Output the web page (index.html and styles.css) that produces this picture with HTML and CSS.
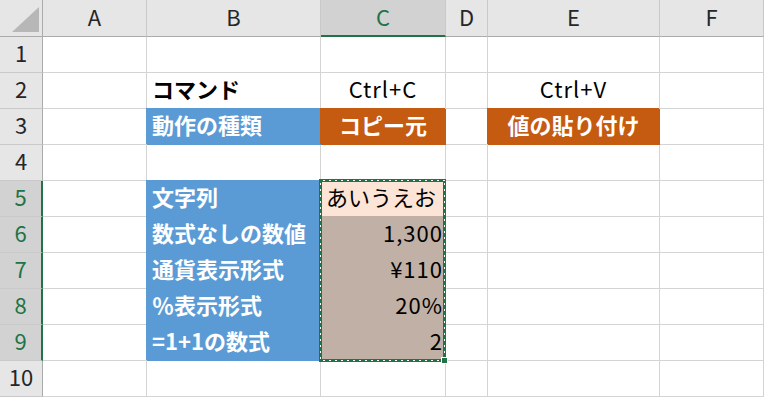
FILE: index.html
```html
<!DOCTYPE html>
<html lang="ja">
<head>
<meta charset="utf-8">
<link rel="stylesheet" href="styles.css">
</head>
<body>
<div class="sheet">
  <div class="grid">
    <div class="corner"><svg width="43" height="37" viewBox="0 0 43 37"><polygon points="39,7 39,32 12,32" fill="#b7b7b7"/></svg></div>
    <div class="ch">A</div>
    <div class="ch">B</div>
    <div class="ch ch-sel">C</div>
    <div class="ch">D</div>
    <div class="ch">E</div>
    <div class="ch">F</div>

    <div class="rh">1</div><div class="c"></div><div class="c"></div><div class="c"></div><div class="c"></div><div class="c"></div><div class="c"></div>

    <div class="rh">2</div><div class="c"></div><div class="c bold">コマンド</div><div class="c center latin">Ctrl+C</div><div class="c"></div><div class="c center latin">Ctrl+V</div><div class="c"></div>

    <div class="rh">3</div><div class="c"></div><div class="c blue bold">動作の種類</div><div class="c orange bold center">コピー元</div><div class="c"></div><div class="c orange bold center">値の貼り付け</div><div class="c"></div>

    <div class="rh">4</div><div class="c"></div><div class="c"></div><div class="c"></div><div class="c"></div><div class="c"></div><div class="c"></div>

    <div class="rh rh-sel">5</div><div class="c"></div><div class="c blue bold">文字列</div><div class="c peach">あいうえお</div><div class="c"></div><div class="c"></div><div class="c"></div>

    <div class="rh rh-sel">6</div><div class="c"></div><div class="c blue bold">数式なしの数値</div><div class="c tan right latin">1,300</div><div class="c"></div><div class="c"></div><div class="c"></div>

    <div class="rh rh-sel">7</div><div class="c"></div><div class="c blue bold">通貨表示形式</div><div class="c tan right latin">¥110</div><div class="c"></div><div class="c"></div><div class="c"></div>

    <div class="rh rh-sel">8</div><div class="c"></div><div class="c blue bold">％表示形式</div><div class="c tan right latin">20%</div><div class="c"></div><div class="c"></div><div class="c"></div>

    <div class="rh rh-sel">9</div><div class="c"></div><div class="c blue bold">=1+1の数式</div><div class="c tan right latin">2</div><div class="c"></div><div class="c"></div><div class="c"></div>

    <div class="rh">10</div><div class="c"></div><div class="c"></div><div class="c"></div><div class="c"></div><div class="c"></div><div class="c"></div>
  </div>
  <div class="selection"><div class="handle"></div></div>
</div>
</body>
</html>
```
FILE: styles.css
```css
html, body {
  margin: 0;
  padding: 0;
  background: #ffffff;
}

.sheet {
  position: relative;
  width: 764px;
  height: 397px;
  overflow: hidden;
  font-family: "Noto Sans CJK JP", sans-serif;
}

.grid {
  display: grid;
  grid-template-columns: 43px 104px 174px 125px 42px 172px 104px;
  grid-template-rows: 37px repeat(10, 36px);
}

.grid > div {
  box-sizing: border-box;
  border-right: 1px solid #d4d4d4;
  border-bottom: 1px solid #d4d4d4;
  font-size: 22px;
  line-height: 31px;
  white-space: nowrap;
  overflow: hidden;
  color: #000;
}

.corner {
  background: #e6e6e6;
  border-right-color: #ababab !important;
  border-bottom-color: #ababab !important;
}

.corner svg {
  display: block;
}

.ch {
  background: #e6e6e6;
  text-align: center;
  line-height: 33px !important;
  border-right-color: #c9c9c9 !important;
  border-bottom-color: #ababab !important;
  color: #262626 !important;
}

.ch-sel {
  background: #d2d2d2;
  color: #217346 !important;
  border-bottom: 2px solid #217346 !important;
}

.rh {
  background: #e6e6e6;
  text-align: center;
  border-right-color: #ababab !important;
  border-bottom-color: #c9c9c9 !important;
  color: #262626 !important;
}

.rh-sel {
  background: #d2d2d2;
  color: #217346 !important;
  border-right: 2px solid #217346 !important;
}

.c {
  padding: 0 2px 0 5px;
}

.latin {
  letter-spacing: 1px;
}

.bold {
  font-weight: 700;
}

.center {
  text-align: center;
  padding: 0;
}

.right {
  text-align: right;
}

.blue {
  background: #5b9bd5;
  border-color: #5b9bd5 !important;
  box-shadow: -1px -1px 0 0 #5b9bd5;
  color: #fff !important;
}

.orange {
  background: #c55a11;
  border-color: #c55a11 !important;
  box-shadow: -1px -1px 0 0 #c55a11;
  color: #fff !important;
}

.peach {
  background: #fce4d6;
  border-color: #fce4d6 !important;
  box-shadow: -1px -1px 0 0 #fce4d6;
}

.tan {
  background: #c0b0a5;
  border-color: #c0b0a5 !important;
  box-shadow: -1px -1px 0 0 #c0b0a5;
}

.selection {
  position: absolute;
  left: 319px;
  top: 179px;
  width: 127px;
  height: 183px;
  box-sizing: border-box;
  border: 3px solid #217346;
}

.selection::before {
  content: "";
  position: absolute;
  left: -2px;
  top: -2px;
  right: -2px;
  bottom: -2px;
  background-image:
    repeating-linear-gradient(90deg, #ffffff 0 2px, transparent 2px 6px),
    repeating-linear-gradient(90deg, #ffffff 0 2px, transparent 2px 6px),
    repeating-linear-gradient(180deg, #ffffff 0 2px, transparent 2px 6px),
    repeating-linear-gradient(180deg, #ffffff 0 2px, transparent 2px 6px);
  background-size: 100% 1px, 100% 1px, 1px 100%, 1px 100%;
  background-position: left 3px top, left 3px bottom, left top 3px, right top 3px;
  background-repeat: no-repeat;
}

.handle {
  position: absolute;
  right: -5px;
  bottom: -5px;
  width: 5px;
  height: 5px;
  background: #217346;
  border: 1px solid #ffffff;
  z-index: 1;
}
```
